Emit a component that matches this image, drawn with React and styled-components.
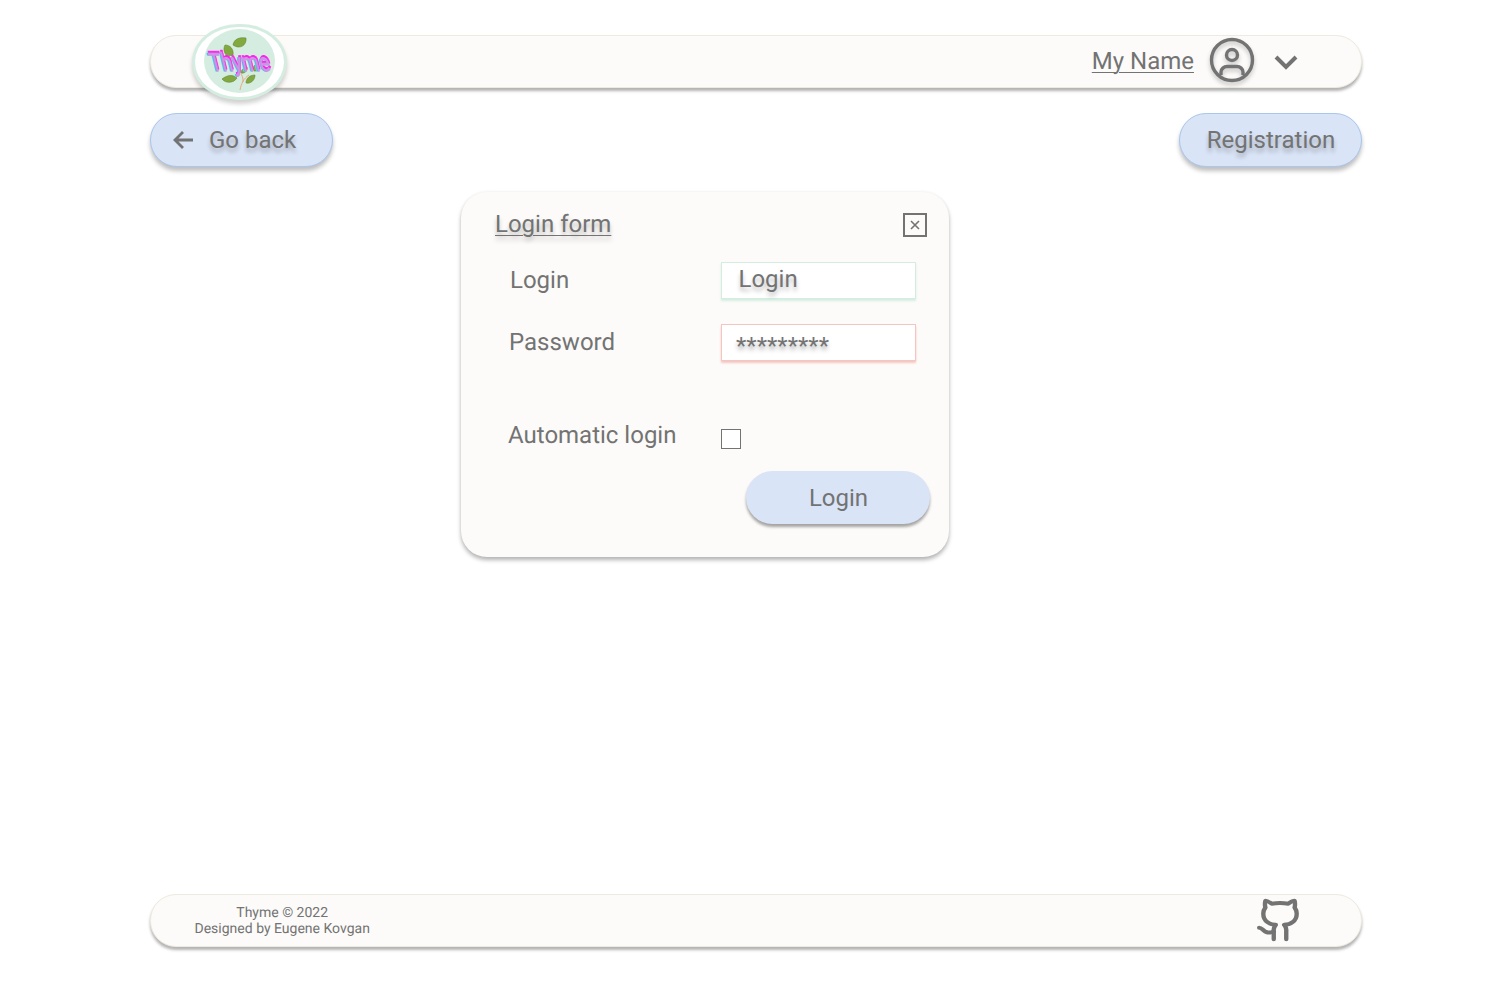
import React from 'react';
import styled, { createGlobalStyle } from 'styled-components';

const GlobalStyle = createGlobalStyle`
  html, body {
    margin: 0;
    padding: 0;
    background: #fff;
    font-family: Roboto, "Liberation Sans", sans-serif;
    color: #737373;
    text-rendering: geometricPrecision;
  }
`;

const Page = styled.div`
  width: 1212px;
  height: 982px;
  margin: 0 auto;
  padding-top: 35px;
  box-sizing: border-box;
  display: flex;
  flex-flow: column nowrap;
`;

const Bar = styled.div`
  height: 53px;
  box-sizing: border-box;
  display: flex;
  flex-flow: row nowrap;
  align-items: center;
  background: #fcfbf9;
  border: 1px solid #efeadf;
  border-radius: 26px;
  box-shadow: 0 3px 3px rgba(0, 0, 0, 0.3);
`;

const LogoFrame = styled.div`
  width: 95px;
  height: 76px;
  flex: none;
  margin: -12px 0 -12px 41px;
  box-sizing: border-box;
  display: flex;
  align-items: center;
  justify-content: center;
  background: #fff;
  border: 3px solid #d5ede0;
  border-radius: 46px / 38px;
  box-shadow: 0 4px 4px rgba(0, 0, 0, 0.18);
`;

const LogoDisc = styled.div`
  width: 71px;
  height: 64px;
  margin-top: -1px;
  border-radius: 50%;
  background: #d5ede0;
  display: flex;
`;

const LogoArt = styled.svg`
  overflow: visible;
`;

const Spacer = styled.div`
  flex-grow: 1;
`;

const UserName = styled.span`
  font-size: 24px;
  line-height: 28px;
  margin: -2px 15px 0 0;
  text-decoration: underline;
  text-decoration-thickness: 1px;
  text-underline-offset: 3px;
`;

const UserIcon = styled.svg`
  width: 46px;
  height: 46px;
  flex: none;
  margin-top: -3px;
  filter: drop-shadow(0 3px 2px rgba(0, 0, 0, 0.22));
`;

const Chevron = styled.svg`
  width: 32px;
  height: 32px;
  flex: none;
  margin: 1px 59px 0 15px;
`;

const NavRow = styled.div`
  display: flex;
  flex-flow: row nowrap;
  justify-content: space-between;
  margin-top: 25px;
`;

const NavButton = styled.button`
  width: 183px;
  height: 54px;
  box-sizing: border-box;
  display: flex;
  align-items: center;
  justify-content: ${props => (props.$icon ? 'flex-start' : 'center')};
  gap: 12px;
  padding: ${props => (props.$icon ? '0 0 0 20px' : '0 0 0 1px')};
  background: #d9e4f6;
  border: 1px solid #a9c6ec;
  border-radius: 27px;
  box-shadow: 0 4px 4px rgba(0, 0, 0, 0.25);
  font: 400 24px/28px Roboto, sans-serif;
  color: #737373;
  text-shadow: 0 4px 4px rgba(0, 0, 0, 0.25);
`;

const BackArrow = styled.svg`
  width: 26px;
  height: 26px;
  flex: none;
  margin-top: -1px;
`;

const Panel = styled.form`
  width: 488px;
  height: 365px;
  margin: 25px 0 0 311px;
  box-sizing: border-box;
  padding: 16px 22px 0 34px;
  background: #fcfbf9;
  border-radius: 26px;
  box-shadow: 0 3px 4px rgba(0, 0, 0, 0.3), 0 -1px 3px rgba(0, 0, 0, 0.03);
  display: flex;
  flex-flow: column nowrap;
`;

const PanelHead = styled.div`
  display: flex;
  align-items: center;
  justify-content: space-between;
  height: 32px;
`;

const PanelTitle = styled.h2`
  margin: 0;
  font-size: 24px;
  line-height: 32px;
  font-weight: 400;
  text-decoration: underline;
  text-decoration-thickness: 1px;
  text-underline-offset: 3px;
  text-shadow: 0 4px 4px rgba(0, 0, 0, 0.25);
`;

const CloseBox = styled.div`
  width: 24px;
  height: 24px;
  margin-top: 2px;
  box-sizing: border-box;
  border: 2px solid #737373;
  display: flex;
  align-items: center;
  justify-content: center;
`;

const Field = styled.div`
  display: grid;
  grid-template-columns: 213px 195px;
  align-items: center;
  margin-top: ${props => props.$top}px;
  margin-left: 13px;
`;

const FieldLabel = styled.label`
  font-size: 24px;
  line-height: 28px;
  margin-top: ${props => (props.$lift ? '-2px' : '0')};
  padding-left: ${props => props.$indent || 0}px;
`;

const TextBox = styled.div`
  height: 37px;
  box-sizing: border-box;
  background: #fff;
  border: 1px solid ${props => props.$accent};
  box-shadow: 0 2px 2px ${props => props.$accent};
  padding-left: ${props => props.$pad}px;
  font-size: 24px;
  line-height: ${props => props.$line}px;
  text-shadow: 0 4px 4px rgba(0, 0, 0, 0.25);
`;

const CheckBox = styled.div`
  width: 20px;
  height: 20px;
  box-sizing: border-box;
  background: #fff;
  border: 1px solid #737373;
  margin-top: 8px;
`;

const SubmitRow = styled.div`
  display: flex;
  justify-content: flex-end;
  margin: 22px -3px 0 0;
`;

const SubmitButton = styled.button`
  width: 184px;
  height: 53px;
  box-sizing: border-box;
  padding: 0 0 0 1px;
  background: #d9e4f6;
  border: none;
  border-radius: 27px;
  box-shadow: 0 3px 3px rgba(0, 0, 0, 0.35);
  font: 400 24px/28px Roboto, sans-serif;
  color: #737373;
`;

const Footer = styled(Bar)`
  margin-top: auto;
  margin-bottom: 35px;
`;

const FooterText = styled.div`
  margin-left: 43.5px;
  font-size: 14px;
  line-height: 16px;
  text-align: center;
`;

const GithubIcon = styled.svg`
  width: 50px;
  height: 46px;
  flex: none;
  margin: -2px 56px 0 0;
`;

const Leaf = ({ d }) => <path d={d} fill="#83a83f" stroke="#5f8a32" strokeWidth="0.6" />;

const Logo = () => (
  <LogoArt width="71" height="64" viewBox="0 0 71 64">
    <Leaf d="M29 16c1-6 6-8 13-7 1 7-6 12-13 7z" />
    <Leaf d="M23 27c-3-3-4-7-2-11 5 0 9 4 8 10z" />
    <Leaf d="M18 50c5-4 11-5 15-1-3 5-11 6-15 1z" />
    <Leaf d="M42 54c0-5 4-8 9-8 0 5-4 9-9 8z" />
    <Leaf d="M37 44c0-3 2-5 6-6 1 3-2 7-6 6z" />
    <Leaf d="M50 42c-1-2-1-5 1-6 3 1 3 4 2 6z" />
    <path d="M36 61c1-6 4-12 9-15M39 53c0-3 0-5-2-8" fill="none" stroke="#e8a07a" strokeWidth="0.9" />
    <g fontFamily="Roboto, sans-serif" fontWeight="400" fontSize="25" transform="skewX(14) translate(-9 -2)">
      <text x="5" y="44" textLength="60" lengthAdjust="spacingAndGlyphs" fill="#35e3e8" stroke="#35e3e8" strokeWidth="0.9">Thyme</text>
      <text x="7" y="42" textLength="60" lengthAdjust="spacingAndGlyphs" fill="#ff22ee" stroke="#ff22ee" strokeWidth="0.9">Thyme</text>
      <text x="6" y="44" textLength="60" lengthAdjust="spacingAndGlyphs" fill="#cc93e6" stroke="#cc93e6" strokeWidth="0.9">Thyme</text>
    </g>
  </LogoArt>
);

const App = () => (
  <>
    <GlobalStyle />
    <Page>
      <Bar>
        <LogoFrame>
          <LogoDisc>
            <Logo />
          </LogoDisc>
        </LogoFrame>
        <Spacer />
        <UserName>My Name</UserName>
        <UserIcon viewBox="0 0 46 46" fill="none" stroke="#737373" strokeWidth="3.4">
          <circle cx="23" cy="23" r="20.5" />
          <circle cx="23" cy="18" r="5.5" />
          <path d="M12 38v-3c0-3 3-5.5 6-5.5h10c3 0 6 2.5 6 5.5v3" />
        </UserIcon>
        <Chevron viewBox="0 0 32 32" fill="none" stroke="#737373" strokeWidth="4" strokeLinejoin="miter">
          <path d="M6 11l10 10 10-10" />
        </Chevron>
      </Bar>

      <NavRow>
        <NavButton type="button" $icon>
          <BackArrow viewBox="0 0 26 26" fill="none" stroke="#737373" strokeWidth="2.8" strokeLinejoin="miter">
            <path d="M22 13H4M12 5l-8 8 8 8" />
          </BackArrow>
          Go back
        </NavButton>
        <NavButton type="button">Registration</NavButton>
      </NavRow>

      <Panel>
        <PanelHead>
          <PanelTitle>Login form</PanelTitle>
          <CloseBox>
            <svg width="10" height="10" viewBox="0 0 10 10" stroke="#737373" strokeWidth="1.6">
              <path d="M1 1l8 8M9 1l-8 8" />
            </svg>
          </CloseBox>
        </PanelHead>
        <Field $top={22}>
          <FieldLabel $indent={2} $lift>Login</FieldLabel>
          <TextBox $accent="#d5ede0" $pad={16.5} $line={33}>Login</TextBox>
        </Field>
        <Field $top={25}>
          <FieldLabel $indent={1} $lift>Password</FieldLabel>
          <TextBox $accent="#f3c6c2" $pad={14} $line={43}>*********</TextBox>
        </Field>
        <Field $top={60}>
          <FieldLabel>Automatic login</FieldLabel>
          <CheckBox />
        </Field>
        <SubmitRow>
          <SubmitButton type="button">Login</SubmitButton>
        </SubmitRow>
      </Panel>

      <Footer>
        <FooterText>
          Thyme © 2022
          <br />
          Designed by Eugene Kovgan
        </FooterText>
        <Spacer />
        <GithubIcon viewBox="0 0 24 24" preserveAspectRatio="none" fill="none" stroke="#737373" strokeWidth="2.1" strokeLinecap="round" strokeLinejoin="round">
          <path d="M15 22v-4a4.8 4.8 0 0 0-1-3.5c3 0 6-2 6-5.5.08-1.25-.27-2.48-1-3.5.28-1.15.28-2.35 0-3.5 0 0-1 0-3 1.5-2.64-.5-5.36-.5-8 0C6 2 5 2 5 2c-.3 1.15-.3 2.35 0 3.5A5.403 5.403 0 0 0 4 9c0 3.5 3 5.5 6 5.5-.39.49-.68 1.05-.85 1.65-.17.6-.22 1.23-.15 1.85v4" />
          <path d="M9 18c-4.51 2-5-2-7-2" />
        </GithubIcon>
      </Footer>
    </Page>
  </>
);

export default App;
